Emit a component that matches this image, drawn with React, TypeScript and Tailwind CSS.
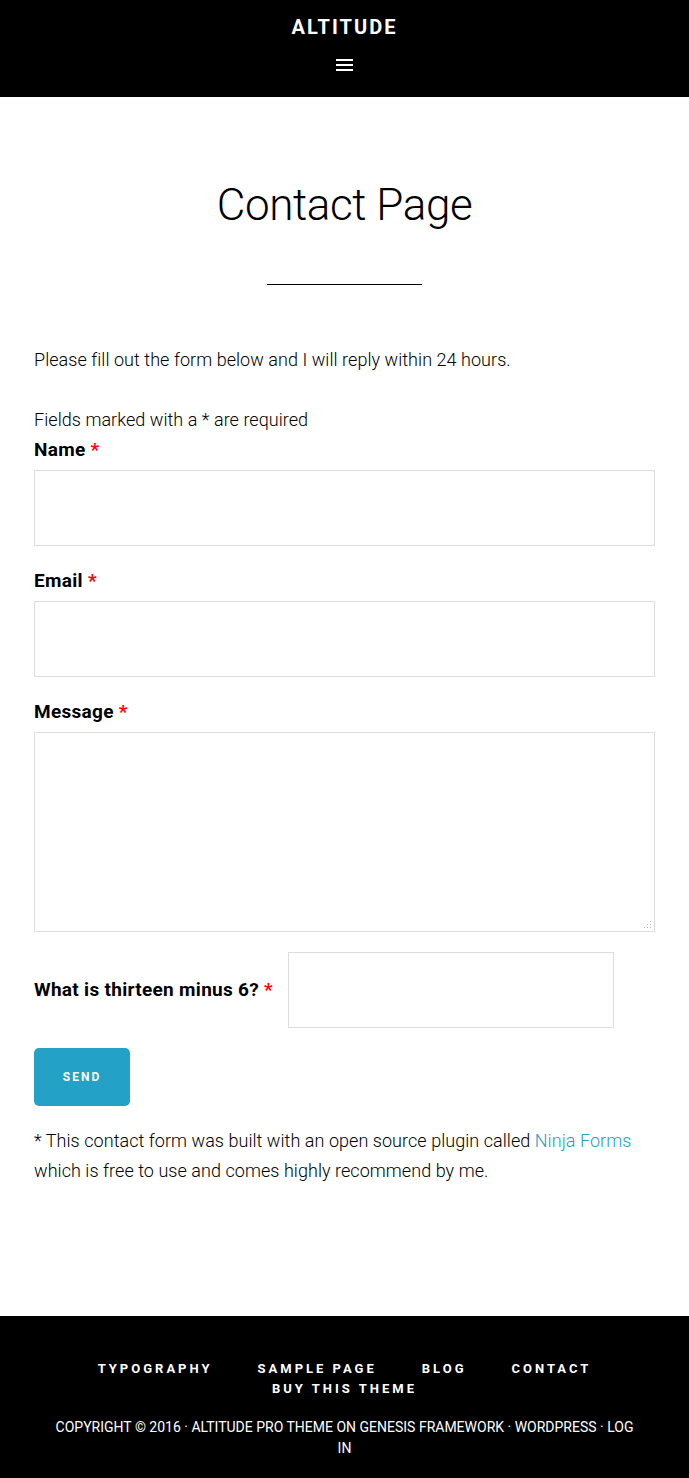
import React from 'react';

const Label = ({ children }: { children: React.ReactNode }) => (
  <label className="block text-[19px] font-bold leading-[30px] text-black tracking-[0.3px]">
    {children} <span className="text-[#ff0000]">*</span>
  </label>
);

const App = () => {
  return (
    <div className="min-h-[1478px] flex flex-col bg-white font-['Roboto',sans-serif] text-black">
      <header className="bg-black h-[97px] flex flex-col items-center pt-[14px]">
        <div className="text-white text-[20px] font-bold tracking-[2px] leading-[26px]">ALTITUDE</div>
        <button className="mt-[19px] flex flex-col gap-[3px] w-[17px]">
          <span className="block h-[2px] bg-white" />
          <span className="block h-[2px] bg-white" />
          <span className="block h-[2px] bg-white" />
        </button>
      </header>

      <main className="flex-1 px-[34px]">
        <div className="flex flex-col items-center pt-[80px]">
          <h1 className="text-[44px] font-light leading-[56px] tracking-[-0.4px]">Contact Page</h1>
          <div className="mt-[51px] w-[155px] h-px bg-black" />
        </div>

        <p className="mt-[60px] text-[18px] font-light leading-[30px] tracking-[0.05px]">
          Please fill out the form below and I will reply within 24 hours.
        </p>

        <form className="mt-[30px]">
          <p className="text-[18px] font-light leading-[30px] tracking-[0.05px]">Fields marked with a * are required</p>
          <Label>Name</Label>
          <input className="mt-[5px] block w-full h-[76px] border border-[#dddddd]" />

          <div className="mt-[20px]">
            <Label>Email</Label>
            <input className="mt-[5px] block w-full h-[76px] border border-[#dddddd]" />
          </div>

          <div className="mt-[20px]">
            <Label>Message</Label>
            <div className="relative mt-[5px]">
              <textarea className="block w-full h-[200px] border border-[#dddddd] resize-none" />
              <svg className="absolute right-[3px] bottom-[3px]" width="8" height="8" viewBox="0 0 8 8" fill="#bbbbbb">
                <rect x="6" y="0" width="1" height="1" />
                <rect x="3" y="3" width="1" height="1" />
                <rect x="6" y="3" width="1" height="1" />
                <rect x="0" y="6" width="1" height="1" />
                <rect x="3" y="6" width="1" height="1" />
                <rect x="6" y="6" width="1" height="1" />
              </svg>
            </div>
          </div>

          <div className="mt-[20px] flex items-center gap-[15px]">
            <Label>What is thirteen minus 6?</Label>
            <input className="block w-[326px] h-[76px] border border-[#dddddd]" />
          </div>

          <button
            type="button"
            className="mt-[20px] w-[96px] h-[58px] rounded-[5px] bg-[#24a1c6] text-white text-[12px] font-bold tracking-[2px]"
          >
            SEND
          </button>
        </form>

        <p className="mt-[20px] text-[18px] font-light leading-[30px] tracking-[0.05px]">
          * This contact form was built with an open source plugin called{' '}
          <a className="text-[#24a1c6]">Ninja Forms</a> which is free to use and comes highly recommend by me.
        </p>
      </main>

      <footer className="bg-black h-[162px] flex flex-col items-center pt-[43px] px-[50px]">
        <nav className="flex flex-wrap justify-center gap-x-[45px] text-white text-[13px] font-bold tracking-[3px] leading-[20px] max-w-[520px]">
          <a>TYPOGRAPHY</a>
          <a>SAMPLE PAGE</a>
          <a>BLOG</a>
          <a>CONTACT</a>
          <a>BUY THIS THEME</a>
        </nav>
        <p className="mt-[18px] text-center text-white text-[14px] font-normal leading-[21px] max-w-[585px]">
          COPYRIGHT © 2016 · ALTITUDE PRO THEME ON GENESIS FRAMEWORK · WORDPRESS · LOG IN
        </p>
      </footer>
    </div>
  );
};

export default App;
